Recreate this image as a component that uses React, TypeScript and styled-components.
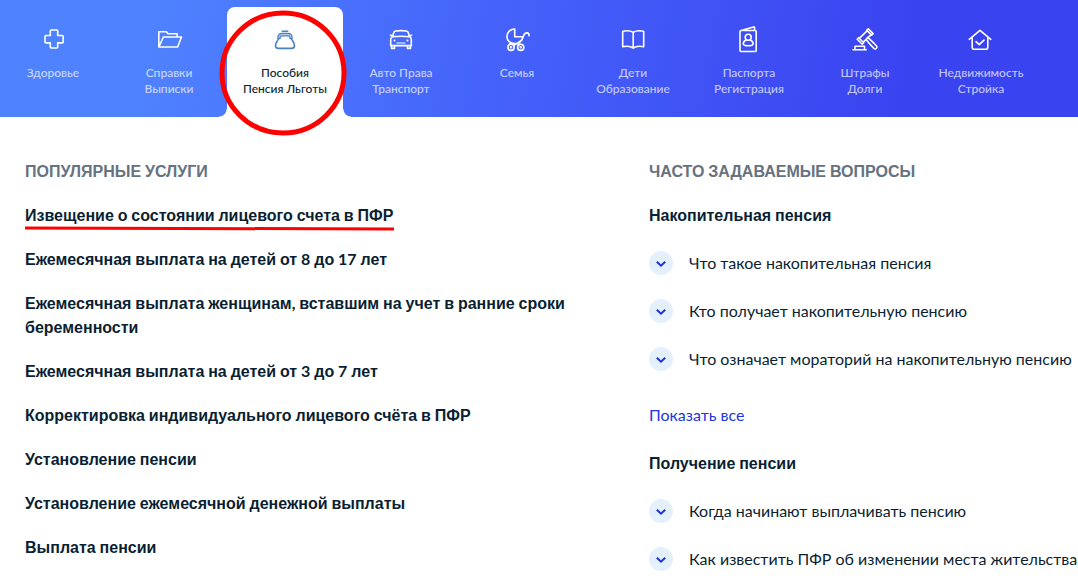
import React from "react";
import styled, { createGlobalStyle, css } from "styled-components";

const GlobalStyle = createGlobalStyle`
  *, *::before, *::after { box-sizing: border-box; }
  body {
    margin: 0;
    background: #fff;
    color: #0b1f33;
    font-family: Lato, "Liberation Sans", sans-serif;
    font-size: 16px;
    line-height: 24px;
    overflow-x: hidden;
  }
`;

const TabBar = styled.nav`
  overflow-x: clip;
  background: linear-gradient(100deg, #4f82ff 14%, #4563fa 45%, #3a43f0 84%);
`;

const TabList = styled.ul`
  display: flex;
  margin: 0 0 0 -5px;
  padding: 7px 0 0;
  list-style: none;
`;

const TabItem = styled.li`
  position: relative;
  flex: 0 0 116px;
`;

const Tab = styled.a<{ $active?: boolean }>`
  position: relative;
  display: flex;
  flex-direction: column;
  align-items: center;
  gap: 10px;
  height: 110px;
  padding-top: 16px;
  color: rgba(255, 255, 255, 0.7);
  font-size: 12px;
  font-weight: 500;
  line-height: 16px;
  text-align: center;
  text-decoration: none;
  white-space: pre-line;

  svg {
    color: #fff;
  }

  ${(p) =>
    p.$active &&
    css`
      background: #fff;
      border-radius: 8px 8px 0 0;
      color: #0b1f33;

      svg {
        color: #4a82c0;
      }

      &::before,
      &::after {
        content: "";
        position: absolute;
        bottom: 0;
        width: 8px;
        height: 8px;
      }

      &::before {
        right: 100%;
        background: radial-gradient(circle at 0 0, transparent 7px, #fff 8px);
      }

      &::after {
        left: 100%;
        background: radial-gradient(circle at 100% 0, transparent 7px, #fff 8px);
      }
    `}
`;

const CircleMark = styled.svg`
  position: absolute;
  z-index: 1;
  top: 2px;
  left: -8px;
  pointer-events: none;
`;

const Content = styled.main`
  display: grid;
  grid-template-columns: minmax(0, 16fr) minmax(0, 11fr);
  padding: 42px 0 8px 25px;
`;

const CyrillicRun = styled.span`
  font-family: "Liberation Sans", Arial, sans-serif;
  line-height: 1;
`;

const SectionTitle = styled.h2`
  margin: 0 0 20px;
  color: #66727f;
  font-size: 16px;
  font-weight: 700;
  line-height: 24px;
  text-transform: uppercase;
`;

const ServiceList = styled.ul`
  display: flex;
  flex-direction: column;
  align-items: flex-start;
  gap: 20px;
  max-width: 560px;
  margin: 0;
  padding: 0;
  list-style: none;
`;

const ServiceItem = styled.li`
  position: relative;
`;

const ServiceLink = styled.a`
  color: #0b1f33;
  font-weight: 700;
  text-decoration: none;
`;

const UnderlineMark = styled.svg`
  position: absolute;
  top: 22px;
  left: 0;
  pointer-events: none;
`;

const TopicTitle = styled.h3`
  margin: 0 0 24px;
  font-size: 16px;
  font-weight: 700;
  line-height: 24px;
`;

const QuestionList = styled.ul`
  display: flex;
  flex-direction: column;
  gap: 24px;
  margin: 0;
  padding: 0;
  list-style: none;
`;

const Question = styled.button`
  display: flex;
  gap: 16px;
  padding: 0;
  border: 0;
  background: none;
  color: inherit;
  font: inherit;
  text-align: left;
  cursor: pointer;
`;

const ChevronBadge = styled.span`
  display: flex;
  flex: none;
  width: 24px;
  height: 24px;
  border-radius: 50%;
  background: #e4f0fb;
  color: #1d36d8;
`;

const ShowAll = styled.a`
  display: block;
  margin: 32px 0 24px;
  color: #1d36e0;
  text-decoration: none;
`;

/* Bold Cyrillic words use the Arial-width face; digits, spaces and punctuation stay in Lato. */
const BoldText = ({ children }: { children: string }) => (
  <>
    {children
      .split(/([А-Яа-яЁё]+)/)
      .map((part, i) => (i % 2 ? <CyrillicRun key={i}>{part}</CyrillicRun> : part))}
  </>
);

const Icon = ({ children }: { children: React.ReactNode }) => (
  <svg
    width="32"
    height="32"
    viewBox="0 0 32 32"
    fill="none"
    stroke="currentColor"
    strokeWidth="1.6"
    strokeLinecap="round"
    strokeLinejoin="round"
    aria-hidden="true"
  >
    {children}
  </svg>
);

const HealthIcon = () => (
  <Icon>
    <path d="M14.3 7h5.4a1 1 0 0 1 1 1v4.5h4.5a1 1 0 0 1 1 1v5.4a1 1 0 0 1-1 1h-4.5V24a1 1 0 0 1-1 1h-5.4a1 1 0 0 1-1-1v-4.1H9a1 1 0 0 1-1-1v-5.4a1 1 0 0 1 1-1h4.3V8a1 1 0 0 1 1-1z" />
  </Icon>
);

const FolderIcon = () => (
  <Icon>
    <path d="M5.8 24V8.8h7.6l1.6 2h9.2v3M10.3 14h18.2l-3.9 10H5.9z" />
  </Icon>
);

const PurseIcon = () => (
  <Icon>
    <path d="M13.3 8.2h5.4" />
    <path
      d="M8.900 15.600v-1.500a3.700 3.700 0 0 1 3.700-3.700h6.800a3.700 3.700 0 0 1 3.700 3.700v1.500h-2.200v-1.200a1.600 1.600 0 0 0-1.600-1.600h-6.600a1.600 1.600 0 0 0-1.600 1.600v1.200z"
      fill="currentColor"
      fillOpacity="0.4"
      strokeWidth="1.2"
    />
    <path d="M9.500 15.600c-.5 2-3 4-3 6.900a2.900 2.900 0 0 0 2.900 2.900h13.200a2.900 2.900 0 0 0 2.900-2.900c0-2.900-2.500-4.900-3-6.900" />
  </Icon>
);

const CarIcon = () => (
  <Icon>
    <path d="M7.500 13.800l1.200-4c.3-1.200.9-1.600 2-1.800 3.400-.5 7.200-.5 10.600 0 1.100.2 1.700.6 2 1.800l1.200 4M7.500 13.800c5.600-.8 11.400-.8 17 0M7.500 13.800c-1.200.6-1.800 1.400-1.800 2.800v6h20.600v-6c0-1.400-.6-2.200-1.800-2.800M5.500 12.200l1.300.6M26.500 12.200l-1.300.6M6.500 22.800v2.600h3v-2.600M22.500 22.800v2.600h3v-2.600" />
    <path d="M12 20h8" strokeWidth="1.2" />
    <circle cx="9.5" cy="17.5" r="1" fill="currentColor" stroke="none" />
    <circle cx="22.5" cy="17.5" r="1" fill="currentColor" stroke="none" />
  </Icon>
);

const StrollerIcon = () => (
  <Icon>
    <path d="M13.700 13.700V6A7.700 7.700 0 0 0 5.900 13.400c0 2.200.9 4 2.300 5.300 1.400 1.300 3.200 1.900 5.400 1.900 4.800 0 7.200-2.300 8.600-6.900M13.700 13.700h8.500M22.200 13.700c.7-2.300 1.900-3.800 3.800-3.800 1.500 0 2.200 1.200 1.900 2.800M20.800 17.200L13 22.300M9.500 19.800l-1 1.600M16 20.600l2.200 1" />
    <circle cx="10" cy="24.300" r="3.100" />
    <circle cx="19.700" cy="24.300" r="3.100" />
    <circle cx="10" cy="24.300" r="0.500" />
    <circle cx="19.700" cy="24.300" r="0.500" />
  </Icon>
);

const BookIcon = () => (
  <Icon>
    <path d="M16.200 9.400C14.500 8.200 12.500 7.800 10 7.800c-1.700 0-3 .2-4.300.6v15.400c1.300-.4 2.600-.6 4.300-.6 2.500 0 4.500.4 6.200 2 1.700-1.600 3.700-2 6.200-2 1.700 0 3 .2 4.300.6V8.400c-1.300-.4-2.600-.6-4.300-.6-2.500 0-4.500.4-6.200 1.600zM16.200 9.400v15.800" />
  </Icon>
);

const PassportIcon = () => (
  <Icon>
    <path d="M8 7.500h14.200a1 1 0 0 1 1 1v19a1 1 0 0 1-1 1H8a1 1 0 0 1-1-1v-19a1 1 0 0 1 1-1zM8 7.500l12.600-3.600a.8.8 0 0 1 1 .8v2.800" />
    <circle cx="15.200" cy="14.200" r="3" />
    <path d="M13.200 17c-1.800.6-2.900 1.900-2.900 3.700 0 1.300 1.600 2 4.900 2s4.900-.7 4.900-2c0-1.800-1.100-3.100-2.900-3.700" />
  </Icon>
);

const GavelIcon = () => (
  <Icon>
    <path d="M4 26.700h13.300M6 26.500v-3.200h9.500v3.200M17.800 7.200l1.500-1.400 4.800 4.800-1.500 1.500zM8.200 16.200l1.500-1.500 5 5-1.500 1.500zM18.300 7.700l-8 7.600M22.200 11.600l-8 7.600M17 16.500l1.800-2.200c2.900 2.600 5.900 5.500 8.600 8.400 1.600 1.800-.6 4.300-2.500 2.700-2.800-2.700-5.400-5.800-7.900-8.900" />
  </Icon>
);

const HouseIcon = () => (
  <Icon>
    <path d="M4.200 16.300L15 7.300l10.800 9M7.200 14v10.200a2 2 0 0 0 2 2h11.600a2 2 0 0 0 2-2V14M11 18.700l3.200 3 4.800-4.600" />
  </Icon>
);

const BriefcaseIcon = () => (
  <Icon>
    <path d="M6 12h20v13H6zM12 12V8h8v4M6 18h20" />
  </Icon>
);

const ChevronIcon = () => (
  <svg width="24" height="24" viewBox="0 0 24 24" fill="none" stroke="currentColor" strokeWidth="2" aria-hidden="true">
    <path d="M7.800 10.700l4.200 4 4.200-4" />
  </svg>
);

const tabs = [
  { label: "Здоровье", icon: <HealthIcon /> },
  { label: "Справки\nВыписки", icon: <FolderIcon /> },
  { label: "Пособия\nПенсия Льготы", icon: <PurseIcon />, active: true },
  { label: "Авто Права\nТранспорт", icon: <CarIcon /> },
  { label: "Семья", icon: <StrollerIcon /> },
  { label: "Дети\nОбразование", icon: <BookIcon /> },
  { label: "Паспорта\nРегистрация", icon: <PassportIcon /> },
  { label: "Штрафы\nДолги", icon: <GavelIcon /> },
  { label: "Недвижимость\nСтройка", icon: <HouseIcon /> },
  { label: "Бизнес", icon: <BriefcaseIcon /> },
];

const services = [
  { title: "Извещение о состоянии лицевого счета в ПФР", marked: true },
  { title: "Ежемесячная выплата на детей от 8 до 17 лет" },
  { title: "Ежемесячная выплата женщинам, вставшим на учет в ранние сроки беременности" },
  { title: "Ежемесячная выплата на детей от 3 до 7 лет" },
  { title: "Корректировка индивидуального лицевого счёта в ПФР" },
  { title: "Установление пенсии" },
  { title: "Установление ежемесячной денежной выплаты" },
  { title: "Выплата пенсии" },
];

const topics = [
  {
    title: "Накопительная пенсия",
    questions: [
      "Что такое накопительная пенсия",
      "Кто получает накопительную пенсию",
      "Что означает мораторий на накопительную пенсию",
    ],
    showAll: true,
  },
  {
    title: "Получение пенсии",
    questions: ["Когда начинают выплачивать пенсию", "Как известить ПФР об изменении места жительства"],
  },
];

export default function App() {
  return (
    <>
      <GlobalStyle />
      <TabBar>
        <TabList>
          {tabs.map((tab) => (
            <TabItem key={tab.label}>
              <Tab href="#" $active={tab.active} aria-current={tab.active ? "page" : undefined}>
                {tab.icon}
                <span>{tab.label}</span>
              </Tab>
              {tab.active && (
                <CircleMark width="128" height="128" viewBox="0 0 128 128" aria-hidden="true">
                  <ellipse cx="64" cy="64" rx="61" ry="60" fill="none" stroke="#ff0000" strokeWidth="5" />
                </CircleMark>
              )}
            </TabItem>
          ))}
        </TabList>
      </TabBar>
      <Content>
        <section>
          <SectionTitle>
            <BoldText>Популярные услуги</BoldText>
          </SectionTitle>
          <ServiceList>
            {services.map((service) => (
              <ServiceItem key={service.title}>
                <ServiceLink href="#">
                  <BoldText>{service.title}</BoldText>
                </ServiceLink>
                {service.marked && (
                  <UnderlineMark width="369" height="6" viewBox="0 0 369 6" aria-hidden="true">
                    <path d="M0 3l369 1" stroke="#ff0000" strokeWidth="3" />
                  </UnderlineMark>
                )}
              </ServiceItem>
            ))}
          </ServiceList>
        </section>
        <section>
          <SectionTitle>
            <BoldText>Часто задаваемые вопросы</BoldText>
          </SectionTitle>
          {topics.map((topic) => (
            <div key={topic.title}>
              <TopicTitle>
                <BoldText>{topic.title}</BoldText>
              </TopicTitle>
              <QuestionList>
                {topic.questions.map((question) => (
                  <li key={question}>
                    <Question type="button" aria-expanded="false">
                      <ChevronBadge>
                        <ChevronIcon />
                      </ChevronBadge>
                      {question}
                    </Question>
                  </li>
                ))}
              </QuestionList>
              {topic.showAll && <ShowAll href="#">Показать все</ShowAll>}
            </div>
          ))}
        </section>
      </Content>
    </>
  );
}
